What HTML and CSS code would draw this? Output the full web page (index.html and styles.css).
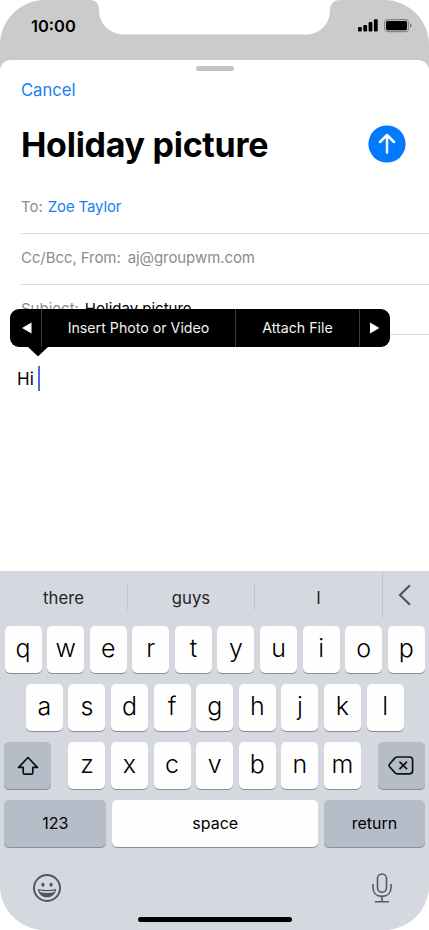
FILE: index.html
```html
<!DOCTYPE html>
<html lang="en">
<head>
<meta charset="utf-8">
<title>New message</title>
<link rel="stylesheet" href="styles.css">
</head>
<body>

<div class="phone">

    <header class="status-bar">
        <svg class="notch" width="250" height="35" viewBox="0 0 250 35"><path d="M0 0C6 0 9 4 9 10C9 24 20 34.5 35 34.5H215C230 34.5 240 24 240 10C240 4 244 0 250 0Z" fill="#fff"/></svg>
        <span class="time">10:00</span>
        <span class="indicators">
            <svg width="20" height="13" viewBox="0 0 20 13">
                <rect x="0" y="8" width="3.8" height="4.5" rx="1"/>
                <rect x="5.3" y="6" width="3.8" height="6.5" rx="1"/>
                <rect x="10.6" y="3" width="3.8" height="9.5" rx="1"/>
                <rect x="15.9" y="0.3" width="3.8" height="12.2" rx="1"/>
            </svg>
            <svg width="28" height="14" viewBox="0 0 28 14">
                <rect x="0.6" y="0.6" width="23.8" height="12" rx="3.2" fill="none" stroke="#858585" stroke-width="1.1"/>
                <rect x="2" y="2" width="21" height="9.2" rx="1.6"/>
                <path d="M26 4.6Q27.6 5.3 27.6 6.6T26 8.6Z" fill="#777"/>
            </svg>
        </span>
    </header>

    <main class="sheet">
        <div class="grabber"></div>
        <a class="cancel">Cancel</a>
        <div class="title-row">
            <h1>Holiday picture</h1>
            <svg class="send" width="38" height="38" viewBox="0 0 38 38"><circle cx="19" cy="19" r="18.6" fill="#007aff"/><path d="M19 27.6V10.5M12 17L19 10L26 17" fill="none" stroke="#fff" stroke-width="2.5" stroke-linecap="round" stroke-linejoin="round"/></svg>
        </div>
        <div class="field"><span class="label to">To:</span><span class="contact">Zoe Taylor</span></div>
        <div class="field"><span class="label from">Cc/Bcc, From:</span><span class="address">aj@groupwm.com</span></div>
        <div class="field"><span class="label subject">Subject:</span><span class="value">Holiday picture</span></div>
        <div class="message">
            <span class="text">Hi</span><span class="caret"></span>
            <div class="menu">
                <span class="arrow prev"><svg width="10" height="12" viewBox="0 0 10 12"><path d="M0 6L9.5 0.5V11.5Z" fill="#fff"/></svg></span>
                <span class="insert">Insert Photo or Video</span>
                <span class="attach">Attach File</span>
                <span class="arrow"><svg width="10" height="12" viewBox="0 0 10 12"><path d="M9.5 6L0 0.5V11.5Z" fill="#fff"/></svg></span>
                <svg class="pointer" width="20" height="10" viewBox="0 0 20 10"><path d="M0 0H20L11 8.5Q10 9.5 9 8.5Z"/></svg>
            </div>
        </div>
    </main>

    <section class="keyboard">
        <div class="suggestions">
            <span>there</span>
            <span>guys</span>
            <span>I</span>
            <span class="collapse"><svg width="14" height="22" viewBox="0 0 14 22"><path d="M12 1.2L2 11L12 20.8" fill="none" stroke="#50545c" stroke-width="2.2"/></svg></span>
        </div>
        <div class="keys">
            <div class="row">
                <span class="key">q</span><span class="key">w</span><span class="key">e</span><span class="key">r</span><span class="key">t</span><span class="key">y</span><span class="key">u</span><span class="key">i</span><span class="key">o</span><span class="key">p</span>
            </div>
            <div class="row">
                <span class="key">a</span><span class="key">s</span><span class="key">d</span><span class="key">f</span><span class="key">g</span><span class="key">h</span><span class="key">j</span><span class="key">k</span><span class="key">l</span>
            </div>
            <div class="row spread">
                <span class="key dark"><svg width="22" height="20" viewBox="0 0 22 20"><path d="M11 1.5L1.6 11.4H6.2V16.8Q6.2 18.2 7.6 18.2H14.4Q15.8 18.2 15.8 16.8V11.4H20.4Z" fill="none" stroke="#111" stroke-width="1.7" stroke-linejoin="round"/></svg></span>
                <div class="row">
                    <span class="key">z</span><span class="key">x</span><span class="key">c</span><span class="key">v</span><span class="key">b</span><span class="key">n</span><span class="key">m</span>
                </div>
                <span class="key dark"><svg width="26" height="19" viewBox="0 0 26 19"><path d="M9.2 1H21.5Q24.6 1 24.6 4V14.8Q24.6 17.8 21.5 17.8H9.2Q8 17.8 7 16.9L1.6 10.8Q0.7 9.4 1.6 8L7 1.9Q8 1 9.2 1Z" fill="none" stroke="#111" stroke-width="1.7"/><path d="M11.5 5.6L19 13.2M19 5.6L11.5 13.2" stroke="#111" stroke-width="1.7"/></svg></span>
            </div>
            <div class="row spread">
                <span class="key dark numbers">123</span>
                <span class="key space">space</span>
                <span class="key dark return">return</span>
            </div>
        </div>
        <div class="tools">
            <svg width="28" height="28" viewBox="0 0 28 28">
                <circle cx="14" cy="14" r="13" fill="none" stroke="#50545c" stroke-width="1.9"/>
                <ellipse cx="9.9" cy="10.8" rx="1.6" ry="2" fill="#50545c"/>
                <ellipse cx="18.1" cy="10.8" rx="1.6" ry="2" fill="#50545c"/>
                <path d="M4.9 15Q14 17 23.1 15C22.8 20 19 23.3 14 23.3S5.2 20 4.9 15Z" fill="#50545c"/>
                <path d="M6.2 16.5Q14 18.1 21.8 16.5Q21.4 17.8 20.6 18.3Q14 19.5 7.4 18.3Q6.6 17.8 6.2 16.5Z" fill="#d5d8df"/>
            </svg>
            <svg width="20" height="30" viewBox="0 0 20 30"><g fill="none" stroke="#565a62" stroke-width="1.6" stroke-linecap="round"><rect x="5.5" y="1" width="9" height="18.2" rx="4.5"/><path d="M1 11.5V14.5C1 20 4.5 23.4 10 23.4S19 20 19 14.5V11.5M10 23.4V28.8M3.5 28.8H16.5"/></g></svg>
        </div>
        <div class="home"></div>
    </section>

</div>

</body>
</html>
```
FILE: styles.css
```css
* {
    box-sizing: border-box;
}
body {
    margin: 0;
    background: #fff;
    color: #000;
    font: 15px/20px Inter, "Liberation Sans", sans-serif;
}
svg {
    display: block;
}

.phone {
    display: flex;
    flex-direction: column;
    width: 429px;
    height: 930px;
    overflow: hidden;
    border-radius: 45px;
    background: #cbcbcb;
}

/* status bar */
.status-bar {
    position: relative;
    display: flex;
    justify-content: space-between;
    height: 60px;
    padding: 16px 17px 0 31px;
}
.notch {
    position: absolute;
    left: 90px;
    top: 0;
}
.time {
    font-size: 16.5px;
    font-weight: 600;
}
.indicators {
    display: flex;
    gap: 6px;
    padding-top: 3px;
}

/* mail sheet */
.sheet {
    flex: 1;
    border-radius: 11px 11px 0 0;
    background: #fff;
}
.grabber {
    width: 38px;
    height: 5px;
    margin: 5.5px auto 0;
    border-radius: 3px;
    background: #c4c4c6;
}
.cancel {
    display: block;
    margin: 9.5px 0 0 21px;
    color: #1780f0;
    font-size: 16.6px;
}
.title-row {
    display: flex;
    justify-content: space-between;
    align-items: center;
    height: 38px;
    margin: 25px 23px 0 21px;
}
h1 {
    margin: 0;
    padding-top: 2px;
    font-size: 34px;
    line-height: 40px;
    font-weight: 700;
    letter-spacing: -0.28px;
}
.field {
    display: flex;
    height: 51px;
    margin-left: 21px;
    padding-top: 14px;
    border-bottom: 1px solid #dedee0;
}
.title-row + .field {
    margin-top: 20px;
}
.field + .field + .field {
    height: 50px;
}
.label, .address {
    color: #8c8c90;
}
.label {
    margin-right: 6px;
}
.to {
    margin-right: 5px;
}
.from {
    margin-right: 7px;
}
.from, .address {
    letter-spacing: -0.08px;
}
.contact {
    color: #1780f0;
    letter-spacing: -0.15px;
}
.message {
    position: relative;
    display: flex;
    align-items: center;
    padding: 31px 0 0 17px;
}
.text {
    padding-top: 1px;
    font-size: 17px;
}
.caret {
    width: 2px;
    height: 25px;
    margin-left: 4px;
    background: #4a6fd8;
}

/* edit menu over the message */
.menu {
    position: absolute;
    left: 10px;
    top: -26px;
    display: flex;
    width: 380px;
    height: 38px;
    border-radius: 9px;
    background: #000;
    color: #f2f2f2;
    font-size: 14.2px;
    line-height: 38px;
    text-align: center;
}
.menu span + span {
    border-left: 1px solid #3c3c3c;
}
.arrow {
    display: flex;
    width: 31px;
    align-items: center;
    justify-content: center;
}
.prev {
    padding-left: 3px;
}
.insert {
    width: 194px;
}
.attach {
    width: 124px;
}
.pointer {
    position: absolute;
    left: 18px;
    top: 37.5px;
}

/* keyboard */
.keyboard {
    height: 359px;
    background: #d5d8df;
}
.suggestions {
    display: grid;
    grid-template-columns: 127px 127px 128px 1fr;
    height: 55px;
    color: #222428;
    font-size: 16.7px;
    line-height: 28px;
    text-align: center;
}
.suggestions span {
    height: 26px;
    margin-top: 13px;
}
.suggestions span + span {
    border-left: 1px solid #c1c4ca;
}
.suggestions .collapse {
    height: 47px;
    margin: 0;
    padding: 13px 0 0 15px;
}
.keys {
    display: flex;
    flex-direction: column;
    gap: 11px;
    padding: 0 4px 0 4.4px;
}
.row {
    display: flex;
    justify-content: center;
    gap: 5.6px;
}
.spread {
    justify-content: space-between;
}
.key {
    display: flex;
    align-items: center;
    justify-content: center;
    width: 37px;
    height: 47px;
    padding-bottom: 3px;
    border-radius: 5px;
    background: #fefefe;
    box-shadow: 0 1px 0 #8b8e94;
    font-size: 25px;
    font-weight: 350;
}
.dark {
    width: 47px;
    padding-bottom: 0;
    background: #b5bdc9;
}
.numbers, .space, .return {
    padding-bottom: 2px;
    font-size: 16px;
    font-weight: 400;
}
.numbers {
    width: 102px;
    padding-bottom: 1px;
}
.space {
    width: 206px;
}
.return {
    width: 101px;
}
.tools {
    display: flex;
    justify-content: space-between;
    align-items: center;
    padding: 26px 37px 0 33px;
}
.home {
    width: 154px;
    height: 5px;
    margin: 14px auto 0;
    border-radius: 3px;
    background: #000;
}
```
